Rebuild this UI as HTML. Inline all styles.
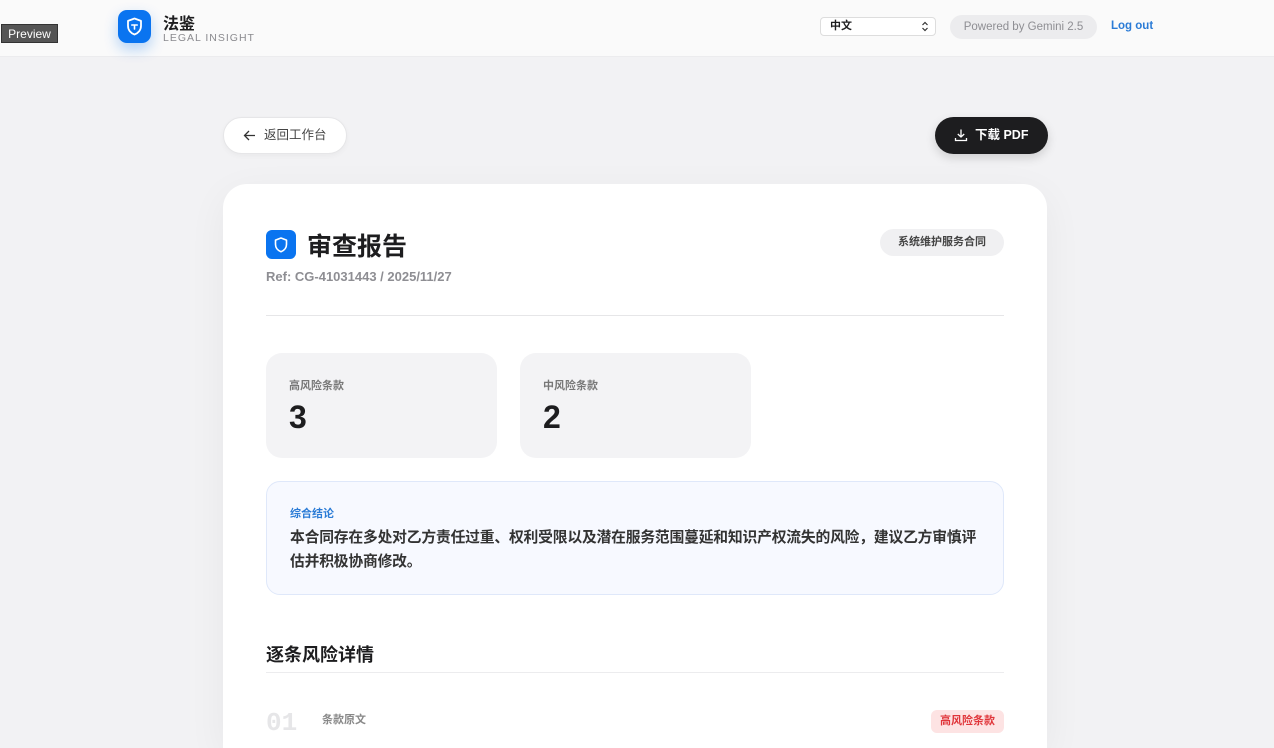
<!DOCTYPE html>
<html><head><meta charset="utf-8"><style>
*{margin:0;padding:0;box-sizing:border-box}
html{width:1274px;height:748px;overflow:hidden}
body{width:1274px;height:748px;overflow:hidden;background:#f2f2f4;font-family:"Liberation Sans","Noto Sans CJK SC",sans-serif;color:#1d1d1f;position:relative}
.hdr{position:absolute;left:0;top:0;width:1274px;height:57px;background:#fafafa;border-bottom:1px solid #ececee}
.abs{position:absolute}
.logo{left:118px;top:10px;width:33px;height:33px;border-radius:9px;background:#0a74f0;box-shadow:0 6px 14px rgba(10,116,240,.3)}
.preview{left:1px;top:24px;width:57px;height:19px;background:#555;color:#fff;font-size:12px;line-height:19px;text-align:center;border:1px solid #333}
.card{left:223px;top:184px;width:824px;height:564px;background:#fff;border-radius:24px 24px 0 0;box-shadow:0 10px 40px rgba(0,0,0,.05)}
.stat{width:231px;height:105px;background:#f3f3f5;border-radius:16px;top:353px}
.stat .l{position:absolute;left:23px;top:24px;font-size:11px;color:#777;font-weight:bold}
.stat .n{position:absolute;left:23px;top:46px;font-size:32px;font-weight:bold;color:#1d1d1f}
</style></head><body>
<div class="hdr"></div>
<div class="abs preview">Preview</div>
<div class="abs logo"><svg width="33" height="33" viewBox="0 0 33 33"><path d="M16.5 8.5l6.5 2.4v5c0 4.2-2.8 7.2-6.5 8.6-3.7-1.4-6.5-4.4-6.5-8.6v-5z" fill="none" stroke="#fff" stroke-width="1.8" stroke-linejoin="round"/><path d="M13.8 15h5.4M16.5 15v4" stroke="#fff" stroke-width="1.6" stroke-linecap="round"/></svg></div>
<div class="abs" style="left:163px;top:10px;font-size:16px;font-weight:bold">法鉴</div>
<div class="abs" style="left:163px;top:32px;font-size:10.5px;color:#8a8a8e;letter-spacing:1px">LEGAL INSIGHT</div>
<div class="abs" style="left:820px;top:17px;width:116px;height:19px;border:1px solid #ddd;border-radius:4px;background:#fff;font-size:11px;font-weight:bold;padding:1px 9px;line-height:15px">中文<svg class="abs" style="right:6px;top:3px" width="8" height="11" viewBox="0 0 8 11"><path d="M1.5 4l2.5-2.5L6.5 4M1.5 7l2.5 2.5L6.5 7" fill="none" stroke="#333" stroke-width="1.2"/></svg></div>
<div class="abs" style="left:950px;top:15px;width:147px;height:24px;border-radius:12px;background:#ececee;color:#8e8e93;font-size:11.5px;line-height:24px;text-align:center">Powered by Gemini 2.5</div>
<div class="abs" style="left:1111px;top:20px;font-size:11.5px;color:#2a7bd6;font-weight:bold">Log out</div>

<div class="abs" style="left:223px;top:117px;width:124px;height:37px;border-radius:19px;background:#fff;border:1px solid #e6e6e8;box-shadow:0 2px 6px rgba(0,0,0,.04);font-size:12.5px;color:#444;line-height:35px;padding-left:40px">返回工作台<svg class="abs" style="left:19px;top:11px" width="13" height="13" viewBox="0 0 13 13"><path d="M12 6.5H1.5M6 2L1.5 6.5 6 11" fill="none" stroke="#333" stroke-width="1.3"/></svg></div>
<div class="abs" style="left:935px;top:117px;width:113px;height:37px;border-radius:19px;background:#1d1d1f;box-shadow:0 4px 10px rgba(0,0,0,.15);color:#fff;font-size:12.5px;line-height:37px;padding-left:40px;font-weight:bold">下载 PDF<svg class="abs" style="left:19px;top:11px" width="14" height="14" viewBox="0 0 14 14"><path d="M7 1.5v7.5M3.8 6L7 9l3.2-3M1.5 10v2.5h11V10" fill="none" stroke="#fff" stroke-width="1.3"/></svg></div>

<div class="abs card"></div>
<div class="abs" style="left:266px;top:230px;width:30px;height:29px;border-radius:6px;background:#0a74f0"><svg width="30" height="29" viewBox="0 0 30 29"><path d="M15 8l5.5 2.1v4.3c0 3.6-2.4 6.1-5.5 7.3-3.1-1.2-5.5-3.7-5.5-7.3v-4.3z" fill="none" stroke="#fff" stroke-width="1.6" stroke-linejoin="round"/></svg></div>
<div class="abs" style="left:307px;top:227px;font-size:25px;font-weight:bold">审查报告</div>
<div class="abs" style="left:266px;top:269px;font-size:13px;color:#8e8e93;font-weight:bold">Ref: CG-41031443 / 2025/11/27</div>
<div class="abs" style="left:880px;top:229px;width:124px;height:27px;border-radius:14px;background:#f0f0f2;font-size:11px;font-weight:bold;color:#444;line-height:27px;text-align:center">系统维护服务合同</div>
<div class="abs" style="left:266px;top:315px;width:738px;height:1px;background:#e6e6e8"></div>

<div class="abs stat" style="left:266px"><div class="l">高风险条款</div><div class="n">3</div></div>
<div class="abs stat" style="left:520px"><div class="l">中风险条款</div><div class="n">2</div></div>

<div class="abs" style="left:266px;top:481px;width:738px;height:114px;border-radius:14px;background:#f7f9ff;border:1.5px solid #dfe8fa"></div>
<div class="abs" style="left:290px;top:505px;font-size:11px;color:#2a7bd6;font-weight:bold">综合结论</div>
<div class="abs" style="left:290px;top:526px;width:700px;font-size:14.8px;line-height:24px;color:#333;font-weight:bold;letter-spacing:-0.2px">本合同存在多处对乙方责任过重、权利受限以及潜在服务范围蔓延和知识产权流失的风险，建议乙方审慎评估并积极协商修改。</div>

<div class="abs" style="left:266px;top:641px;font-size:18px;font-weight:bold">逐条风险详情</div>
<div class="abs" style="left:266px;top:672px;width:738px;height:1px;background:#ececee"></div>
<div class="abs" style="left:266px;top:708px;font-size:26px;font-weight:bold;color:#e6e6e8;font-family:'Liberation Mono',monospace">01</div>
<div class="abs" style="left:322px;top:711px;font-size:11px;color:#888;font-weight:bold">条款原文</div>
<div class="abs" style="left:931px;top:710px;width:73px;height:23px;border-radius:6px;background:#fde3e3;color:#e0353a;font-size:11px;font-weight:bold;line-height:23px;text-align:center">高风险条款</div>
</body></html>
